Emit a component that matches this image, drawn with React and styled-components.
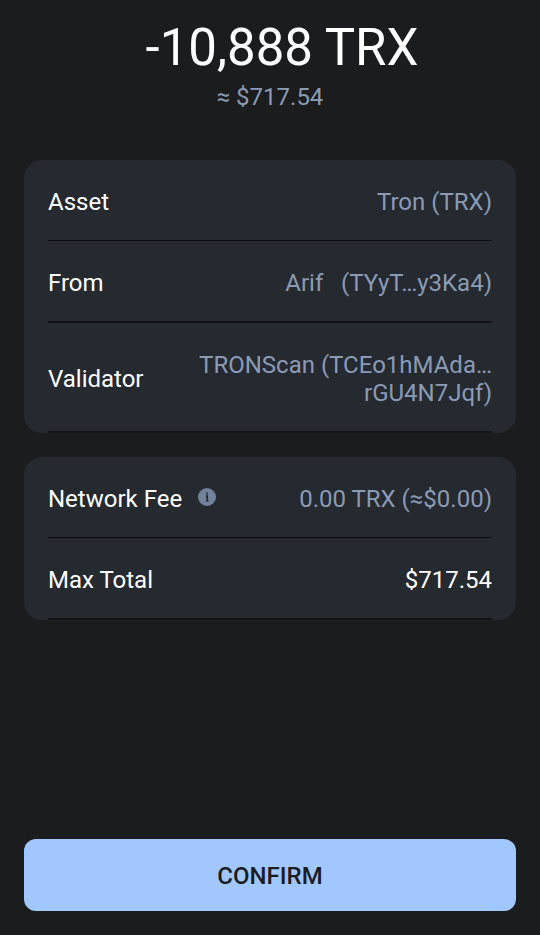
import React from 'react';
import styled, { createGlobalStyle } from 'styled-components';

const GlobalStyle = createGlobalStyle`
  * {
    box-sizing: border-box;
  }

  body {
    margin: 0;
    background-color: #1b1c1e;
    font-family: Roboto, sans-serif;
  }
`;

const Screen = styled.main`
  display: flex;
  flex-direction: column;
  height: 935px;
  padding: 18px 24px 24px;
  color: #fff;
`;

const Summary = styled.header`
  display: flex;
  flex-direction: column;
  align-items: center;
  height: 142px;
`;

const Amount = styled.h1`
  margin: 0;
  padding-left: 24px;
  font-size: 51px;
  font-weight: 400;
  line-height: 60px;
  white-space: nowrap;
`;

const FiatAmount = styled.div`
  margin-top: 5px;
  color: #8a9bb5;
  font-size: 24px;
  line-height: 29px;
`;

const Card = styled.section`
  margin-bottom: 24px;
  padding: 0 24px;
  border-radius: 18px;
  background-color: #252930;
`;

const Row = styled.div`
  display: flex;
  align-items: center;
  justify-content: space-between;
  height: ${(props) => props.$height || 82}px;
  padding-top: 3px;
  border-bottom: 2px solid #111317;
  font-size: 24px;
  line-height: 28px;

  &:first-child {
    height: 81px;
    border-bottom: 1px solid #0c0e12;
  }
`;

const Label = styled.span`
  display: flex;
  align-items: center;
  gap: 16px;
`;

const Value = styled.span`
  color: ${(props) => (props.$primary ? '#fff' : '#8a9bb5')};
  text-align: right;
  white-space: pre;
`;

const ConfirmButton = styled.button`
  height: 72px;
  margin-top: auto;
  padding-top: 3px;
  border: none;
  border-radius: 12px;
  background-color: #a1c7ff;
  color: #1b1c1e;
  font-family: inherit;
  font-size: 24px;
  font-weight: 500;
`;

const InfoMark = styled.svg`
  display: block;
  margin-bottom: 3px;
`;

const InfoIcon = () => (
  <InfoMark width="18" height="18" viewBox="0 0 18 18">
    <circle cx="9" cy="9" r="9" fill="#73829b" />
    <path
      d="M9.2 4.5v1.9M7.8 8.1h1.4v4.7M8.2 12.9h2.2"
      stroke="#252930"
      strokeWidth="1.7"
      fill="none"
    />
  </InfoMark>
);

const App = () => {
  return (
    <>
      <GlobalStyle />
      <Screen>
        <Summary>
          <Amount>-10,888 TRX</Amount>
          <FiatAmount>≈ $717.54</FiatAmount>
        </Summary>
        <Card>
          <Row>
            <Label>Asset</Label>
            <Value>Tron (TRX)</Value>
          </Row>
          <Row>
            <Label>From</Label>
            <Value>{'Arif   (TYyT…y3Ka4)'}</Value>
          </Row>
          <Row $height={110}>
            <Label>Validator</Label>
            <Value>{'TRONScan (TCEo1hMAda…\nrGU4N7Jqf)'}</Value>
          </Row>
        </Card>
        <Card>
          <Row>
            <Label>
              Network Fee
              <InfoIcon />
            </Label>
            <Value>0.00 TRX (≈$0.00)</Value>
          </Row>
          <Row>
            <Label>Max Total</Label>
            <Value $primary>$717.54</Value>
          </Row>
        </Card>
        <ConfirmButton>CONFIRM</ConfirmButton>
      </Screen>
    </>
  );
};

export default App;
